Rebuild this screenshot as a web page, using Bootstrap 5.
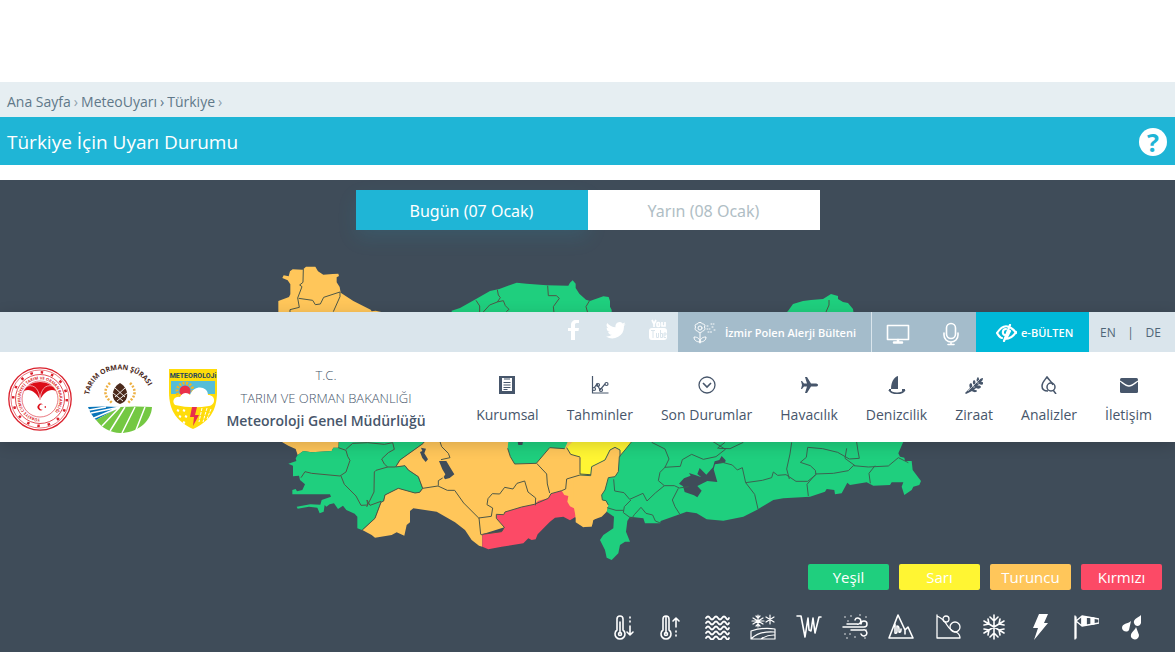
<!DOCTYPE html>
<html lang="tr">
<head>
<meta charset="utf-8">
<meta name="viewport" content="width=device-width, initial-scale=1">
<title>Türkiye İçin Uyarı Durumu</title>
<link href="https://cdn.jsdelivr.net/npm/bootstrap@5.3.0/dist/css/bootstrap.min.css" rel="stylesheet">
<style>
body{font-family:"Open Sans","Noto Sans",sans-serif;font-size:14px;color:#47566b;background:#fff}
a{color:inherit;text-decoration:none}
svg{display:block;flex:none}
.top-space{height:82px}
.crumbs{background:#e6eef2;height:35px;padding:3px 7px 0;color:#5f7889;gap:3px}
.crumbs small{font-size:14px;color:#8fa1ad}
.page-title{background:#1fb5d6;height:48px;padding:2px 8px 0 7px;color:#fff}
.page-title h1{font-size:19px;font-weight:400;margin:0;line-height:28px}
.help{width:28px;height:28px;border:0;border-radius:50%;background:#fff;color:#1fb5d6;font-weight:700;font-size:25px;line-height:28px;padding:0}
.map-area{margin-top:15px;background:#3f4c59;padding:10px 13px 12px;overflow:hidden}
.day-tabs{max-width:464px;height:40px;margin:0 auto}
.day-tabs button{flex:1;border:0;background:#fff;color:#b0bec5;font-family:"Noto Sans",sans-serif;font-size:16px;padding-top:3px}
.day-tabs button.today{background:#1fb5d6;color:#fff;box-shadow:0 8px 20px rgba(31,181,214,.12)}
.turkey{max-width:675px;width:100%;margin:20px auto 4px}
.levels{gap:10px}
.levels span{width:81px;height:26px;border-radius:2px;color:#fff;text-align:center;font-size:15px;line-height:27px}
.g{background:#1fcf7e}.y{background:#fff533}.o{background:#ffc65a}.r{background:#fc4a66}
.events{max-width:533px;margin:24px 17px 0 auto}
.events svg,.line-icon{fill:none;stroke:#fff;stroke-width:1.6;stroke-linecap:round;stroke-linejoin:round}
.site-head{position:absolute;top:312px;left:0;right:0;z-index:5;background:#fff;box-shadow:0 3px 14px rgba(0,0,0,.16)}
.util{background:#dae5ec;height:40px;font-size:12px;white-space:nowrap}
.social{gap:22px;margin-right:10px;padding-bottom:4px}
.polen{background:#a4bccb;color:#fff;font-weight:600;font-size:11px;width:193px;padding:2px 14px 0;gap:9px}
.tools{background:#a4bccb;width:105px;border-left:1px solid #dae5ec;padding:3px 16px 0 14px}
.bulletin{background:#00b8d8;color:#fff;font-weight:600;font-size:11px;width:113px;padding:2px 15px 0 20px;gap:4px}
.langs{width:86px;padding:1px 14px 0 11px;color:#4f6577}
.brand-row{height:90px;padding:0 23px 0 8px}
.logos{gap:13px}
.agency{width:200px;margin-left:8px;padding-top:2px;font-weight:300;line-height:22px;font-size:13px}
.agency strong{font-size:14px;font-weight:600;white-space:nowrap}
.agency p{margin:0 0 1px}
.main-menu{gap:28px;padding-top:8px}
.main-menu a{display:flex;flex-direction:column;align-items:center;gap:10px;line-height:22px}
</style>
</head>
<body>
<header class="site-head">
<div class="util d-flex justify-content-end align-items-stretch">
  <div class="social d-flex align-items-center">
    <a href="#" aria-label="Facebook"><svg width="20" height="20" fill="#fff"><path d="M7 20V11H4V8h3V5c0-3 2-5 5-5h3v3h-2c-2 0-2 1-2 2v3h4l-.5 3H11v9z"/></svg></a>
    <a href="#" aria-label="Twitter"><svg width="20" height="20" viewBox="0 0 24 24" fill="#fff"><path d="M23.600 4.900a10 10 0 0 1-2.700.8 5 5 0 0 0 2.100-2.700 10 10 0 0 1-3.100 1.200 4.900 4.900 0 0 0-8.400 4.500A14 14 0 0 1 1.500 3.500 4.900 4.900 0 0 0 3 10a5 5 0 0 1-2.200-.6 4.900 4.900 0 0 0 4 4.900 5 5 0 0 1-2.300.1 4.900 4.900 0 0 0 4.600 3.400A10 10 0 0 1 0 19.900 14 14 0 0 0 21.500 7.300a10 10 0 0 0 2.100-2.400z"/></svg></a>
    <a href="#" aria-label="YouTube"><svg width="20" height="22" fill="#fff"><rect x="1" y="9" width="18" height="12" rx="3"/><g fill="none" stroke="#fff" stroke-width="1.700"><path d="M4 1l2 4 2-4M6 5v3"/><rect x="9" y="3.500" width="2.500" height="4" rx="1"/><path d="M14 3v4h3V3"/></g><g fill="none" stroke="#dae5ec"><path d="M3 11.500h4M5 12v7M8.500 14v4.500h2V14M12.500 11v7.500h2v-4h-2M16 16h2v-2h-2v4.500h2"/></g></svg></a>
  </div>
  <a href="#" class="polen d-flex align-items-center"><svg width="24" height="24" class="line-icon" style="stroke-width:1"><circle cx="8" cy="7" r="2"/><path d="M8 1.500c2 0 2 1 2.500 1.500 2 0 3 1 2 3 1 2 0 4-2 4-1 2-4 2-5 0-2 0-3-2-2-4-1-2 0-3 2-3 0-1 1-1.500 2.500-1.500zM8 12v10M8 21c-4 0-6-2-6-5 4 0 6 2 6 5zm0 0c0-3 2-5 6-5 0 3-2 5-6 5z"/><path d="M15 5h2m2-2h3m-7 5h3m2-2h1m-5 5h4m2-2h1" stroke-dasharray="1 1.500"/></svg>İzmir Polen Alerji Bülteni</a>
  <div class="tools d-flex align-items-center justify-content-between">
    <a href="#" aria-label="Ekran"><svg width="24" height="22" class="line-icon"><rect x="1.500" y="2.500" width="21" height="14"/><path d="M12 17v2M8 19.500h8" stroke-width="2.500"/></svg></a>
    <a href="#" aria-label="Ses"><svg width="18" height="24" class="line-icon"><rect x="4.500" y="1.500" width="9" height="15" rx="4.500"/><path d="M2 11v2a7 7 0 0 0 14 0v-2M9 20v2M6 22.500h6"/></svg></a>
  </div>
  <a href="#" class="bulletin d-flex align-items-center"><svg width="21" height="18" class="line-icon" style="stroke-width:2.200"><path d="M1 9c4-6 8-8 12-6M20 8c-3 5-6 7-11 7M1 9c2 3 3 5 5 5M15 4c2 1 4 3 5 5M14 1L8 17M10 5C6 5 6 11 9 11M14 7l-3 6"/></svg>e-BÜLTEN</a>
  <div class="langs d-flex align-items-center justify-content-between"><a href="#">EN</a><span>|</span><a href="#">DE</a></div>
</div>
<div class="brand-row d-flex align-items-center">
  <a href="#" class="logos d-flex align-items-center pt-1" aria-label="Kurum logoları">
    <svg width="64" height="66" viewBox="0 0 64 66"><g fill="none" stroke="#da1f2b"><circle cx="32" cy="33" r="31.200" stroke-width="1.300"/><circle cx="32" cy="33" r="29" stroke-width=".6"/><circle cx="32" cy="33" r="24.500" stroke-width=".8"/><circle cx="32" cy="33" r="18" stroke-width=".6"/><circle cx="32" cy="33" r="26.800" stroke-width="2.500" stroke-dasharray="2.500 8.020"/></g><path id="sealRing" d="M32 52.500a19.500 19.500 0 1 1 .1 0" fill="none"/><text font-size="4" font-weight="700" fill="#da1f2b"><textPath href="#sealRing">TÜRKİYE CUMHURİYETİ TARIM VE ORMAN BAKANLIĞI</textPath></text><path d="M16 25c6-12 26-12 32 0-6-3-12 1-16 9-4-8-10-12-16-9z" fill="#dc0d18"/><path d="M19 20c9-2 12 5 13 13M45 20c-9-2-12 5-13 13" fill="none" stroke="#fff" stroke-width=".6"/><path d="M35 38.500a3.300 3.300 0 1 0 0 5 2.700 2.700 0 1 1 0-5zM36 41l2-1v2z" fill="#dc0d18"/></svg>
    <svg width="70" height="68" viewBox="0 0 70 68" overflow="visible"><path id="pineArc" d="M4 30C10-4 60-4 67 31" fill="none"/><text font-size="7" font-weight="700" fill="#4b2a1c"><textPath href="#pineArc">TARIM ORMAN ŞÛRASI</textPath></text><path d="M35 18c-5 3-8 8-7 14 1 4 4 6 7 7 3-1 6-3 7-7 1-6-2-11-7-14z" fill="#4b2a1c"/><path d="M30 23l10 9M28 28l10 8M40 23l-10 9M42 28l-10 8" stroke="#fff" stroke-width=".9"/><path d="M25 18q-8 8-2 16l4 4M45 18q8 8 2 16l-4 4" fill="none" stroke="#edb043" stroke-width="2.500" stroke-dasharray="2 1.500"/><path d="M3 42q15-1 32 0L11 55Q6 50 3 42z" fill="#0875b9"/><path d="M35 42q17-1 32 0c-1 16-16 26-32 26-9 0-18-5-24-13z" fill="#74c843"/><path d="M35 42L6 48M35 42L9 53M35 42L17 61M40 42L25 66M50 42L37 68M60 42L51 65M21 42L4 45" stroke="#fff" stroke-width="1.500"/></svg>
    <svg width="50" height="62" viewBox="0 0 50 62"><path d="M1 1h48v23c0 20-9 30-24 37C10 54 1 44 1 24z" fill="#ffdc0a"/><path d="M3 13h44v13H3z" fill="#55bdd8"/><circle cx="17" cy="23" r="8" fill="none" stroke="#f6b41b" stroke-width="3" stroke-dasharray="2 1.500"/><circle cx="17" cy="23" r="5.500" fill="#ea3048"/><path d="M7 37c-4-4 0-9 5-8 2-5 8-5 10-2 4-11 18-9 18 0 8 0 8 10 1 11q-17 3-34-1z" fill="#fff"/><path d="M24 39h5l-2 8h4l-6 11 1-9h-4z" fill="#e8304b"/><path d="M9 42l2 1m4-1l2 1m-6 5l2 1m4-1l2 1m-4 5l2 1" stroke="#fff" stroke-width="2"/><path d="M34 40l-3 14m8-14l-4 14m8-13l-4 10" stroke="#fff" stroke-dasharray="3 1"/><text x="25" y="10" text-anchor="middle" font-family="Roboto" font-size="7" font-weight="700" fill="#25465d">METEOROLOJi</text></svg>
  </a>
  <div class="agency text-center"><p>T.C.</p><p>TARIM VE ORMAN BAKANLIĞI</p><strong>Meteoroloji Genel Müdürlüğü</strong></div>
  <nav class="main-menu d-flex ms-auto" aria-label="Ana menü">
    <a href="#"><svg width="18" height="18"><path d="M1 0h16v18H1z" fill="#47566b"/><path d="M4 2h10v13H4z" fill="#fff"/><path d="M6 3h6M5.500 6.500h7M5.500 9h7M5.500 11.500h7M5.500 13.500h4" stroke="#47566b" stroke-width="1.200"/></svg>Kurumsal</a>
    <a href="#"><svg width="18" height="18" fill="none" stroke="#47566b" stroke-width="1.200"><path d="M1.500 0v17h16M3 12l3-4 3 6 5-6"/><circle cx="3" cy="13" r="1.500"/><circle cx="7" cy="9" r="1.500"/><circle cx="10" cy="14" r="1.500"/><circle cx="15.500" cy="8" r="1.500"/></svg>Tahminler</a>
    <a href="#"><svg width="18" height="18" fill="none" stroke="#47566b" stroke-width="1.300"><circle cx="9" cy="9" r="8"/><path d="M5 7l4 4 4-4" stroke-width="1.600"/></svg>Son Durumlar</a>
    <a href="#"><svg width="18" height="18" fill="#47566b"><path d="M18 9c0 1-1 1.500-3 1.500h-4L7 17H5l2-6.500H4L2 13H1l1-4-1-4h1l2 2.500h3L5 1h2l4 6.500h4c2 0 3 .5 3 1.500z"/></svg>Havacılık</a>
    <a href="#"><svg width="18" height="18"><path d="M3 13C3 6 6 1 10 0v13z" fill="#47566b"/><path d="M1 14c3 4 12 5 16 0M1 14h2m11 0h3" fill="none" stroke="#47566b" stroke-width="1.800"/></svg>Denizcilik</a>
    <a href="#"><svg width="18" height="18" fill="#47566b"><path d="M1 18l-1-1 5-5c-1-2-1-4 1-5 1 1 2 3 1 4l2-2c-2-2-1-4 0-5 2 1 2 3 1 4l2-2c-1-2 0-4 1-5 1 1 1 2 1 3 1-1 2-2 4-2 0 2-1 3-2 4 1 0 2 0 3 1-1 2-3 2-5 1l-2 2c2-1 4 0 4 1-1 2-3 2-5 1l-2 2c2 0 3 0 3 1-1 2-4 1-5 0z"/><path d="M3 15L15 3M8 8v2m3-5v2M8 11h2m2-4h2" stroke="#fff" stroke-width=".6"/></svg>Ziraat</a>
    <a href="#"><svg width="18" height="18" fill="none" stroke="#47566b" stroke-width="1.500"><path d="M8 15c-4 0-6-2-6-5 0-4 3-6 5-9 2 3 5 5 6 8"/><circle cx="11" cy="11" r="4"/><path d="M13 14l3 4"/></svg>Analizler</a>
    <a href="#"><svg width="18" height="18"><rect x="0" y="2" width="18" height="15" rx="1.500" fill="#47566b"/><path d="M0 5c3 2 6 5 9 5s6-3 9-5" fill="none" stroke="#fff" stroke-width="1.300"/></svg>İletişim</a>
  </nav>
</div>
</header>
<main>
<div class="top-space"></div>
<nav class="crumbs d-flex align-items-center" aria-label="Konum"><a href="#">Ana Sayfa</a><small>›</small><a href="#">MeteoUyarı</a><span>›</span><a href="#">Türkiye</a><small>›</small></nav>
<div class="page-title d-flex align-items-center justify-content-between"><h1>Türkiye İçin Uyarı Durumu</h1><button class="help" type="button">?</button></div>
<section class="map-area">
  <div class="day-tabs d-flex"><button class="today" type="button">Bugün (07 Ocak)</button><button type="button">Yarın (08 Ocak)</button></div>
  <svg class="turkey" viewBox="250 250 675 310" role="img" aria-label="Türkiye uyarı haritası">
    <g transform="translate(270 255) scale(.33333)">
      <path fill="#ffc65a" d="M25 180V138l32-12 4-8V88l-8-12-16-7 4-8 15 3 4-15 8-6 30 1 10-9h28l8 14 16 10 28-2 17-1 2 7-7 4v15l9 14 3 17 38 25 52 26 3 5 12-2 20 5v10z"/>
      <path fill="#1fcf7e" d="M545 175v-8l25-8 48-27 42-24 28-6 52-19 30 3 60 5 65 1 5-9 8-7 9 10v13l11 17 20 18 12 4 40-14 16 2 4 12v17l5 10v10z"/>
      <path fill="none" stroke="#4d5746" stroke-width="3" d="M100 42l-1 40-10 8 7 5-13 34 5 28-28 7v10M86 130l42 6 8 13 15-2 10-20 49-16 0 14-20 45M618 136l11 17v22M682 104l3 16 6 8-9 13-23 9-20 22M682 141l18-4 6 15 11 11-8 7M833 92l2 30 24 0 9 8-18 25 2 18M958 138l-10 17 5 18"/>
    </g>
    <path fill="#1fcf7e" d="M783 316l5-5 5-7 10-3 8-1 12-1 8-5 7 2v3l5 3 5 1 5 6 1 7z"/><path d="M829 300v5l-3 7" fill="none" stroke="#4d5746"/>
    <g transform="translate(275 435) scale(.33333)">
      <path fill="#ffc65a" d="M22 0v22l18 10 22 10 6 18 17-12 25 4 60-4 5-10h15l2-38zM450 0v20l-5 5-70 50-13 21 28-4 10 13 30 20 13 35-9 12-14 2-50-14-40 20-4 18-8 4-18 48-38 35 28 15 10 8 50-8 15-8 23 10 7-32 10-8v-34l10-8 70 10 55 32 30 23 20 30 22 17 10 3 0-37 218-70 60 17 25 30h25l5-20 35-22V0z"/>
      <path fill="#1fcf7e" d="M192 0v22l-2 16h-15l-5 10-60 4-25-4-17 12-6 10 2 8-24 8 14 6v32l18-2 3 13 15 13-8 17-16 4-4-7-10 3v13l113 0 3 7-28 10-4 14-30-1-41 7 3 6 34-6 25 3 7 17 12-5 3-20 5 5 10-7 13-3 12 17 15-10 10 13 25 11 8 9v35l14 5 38-35 18-48 8-4 4-18 40-20 50 14 14-2 9-12-13-35-30-20-10-13-28 4 13-21 70-50 7-25zM702 0l-4 40 8 25 13 22 65-2 40-47 45 3 8-18V0zM990 160l-12 30 2 10 10-3z"/>
      <path fill="#fff533" d="M875 38l18-18V0h190v20l-20 40-10-20-20-2-25 42-50 15-1 27-44-3 4-52-28-8z"/>
      <path fill="#fc4a66" d="M622 298L680 290 688 277 664 250 664 238 686 239 690 231 740 216 778 208 790 197 820 190 828 176 860 167 868 180 880 183 877 200 885 214 897 220 902 245 885 256 865 245 840 248 825 260 810 275 788 298 782 313 770 315 760 310 745 325 680 335 640 343 622 335z"/>
      <g fill="#3f4c59"><path d="M438 38l15 3-5 14 11 18-7 8-10-12-7-18 7-3zM492 78l22 0 12 20 12 20-14 11-14 4-4-7 5-8-9-15zM727 15h18l-3 15h-12z"/></g>
      <path fill="none" stroke="#4d5746" stroke-width="3" d="M190 38l23 8 5 18 7 12-12 35-18 12-85-8-20-5-12 18M213 43l20-18 45-2 50 5 25-5 5 20-18 10-20 19 8 15 10 9-35 10-5 5-1 60-22 45M198 123l10 25 35 35 15 28 20-1-2-15 9 16 33-12M338 96l23 0M445 25l-70 50-13 21 28-4 10 13 30 20 13 35-9 12-14 2-50-14-40 20-4 18-8 4-18 48-38 35M698 40l8 25 13 22 65-2 40-47 45 3M495 20l5 15 20 20 5 13-27 6M490 152v-15l13-8M443 160l46-7 28 13 22 0 27 38 45 45 38-5 4-25-17-10 3-18 13-15 22 1 15-20 25 5 12-17 23-7 10 33 23 18-1 22M612 248l5 50 5 2M785 85l30 32 2 30 7 27M875 38l12 20 28 8M860 167l12-5 3-30 40-12M915 67l0 50 44 3M622 298L680 290 688 277 664 250 664 238 686 239 690 231 740 216 778 208 820 190 828 176 860 167"/>
    </g>
    <g transform="translate(570 435) scale(.33333)">
      <path fill="#fff533" d="M100 0H195L160 60 100 80z"/>
      <path fill="#ffc65a" d="M10 130L62 122 65 95 105 75 120 45 135 37 150 45 155 55 150 110 140 128 120 132 100 180 100 196 115 198 118 210 110 230 95 245 68 255 66 272 40 277 17 262V225L10 213z"/>
      <path fill="#1fcf7e" d="M185 0v20l-20 25-17 20-3 45-10 15-20 3-10 37-10 15 2 15 11 2 7 13-5 20 22 15-2 35-30 20-10 15 15 30 5 23 15 7 20-20 5-25 15-10h15l-12-30 4-32 8-13 40 5 5 15h45l2-7 78-28 30 5 30 18 50 4 60-12 40-20 50-30 30-5 80-5 45-15 5-8 23 3 2 13 20-3 17-32 8 7 50-8 20 10 50-2 5-8h35l-5 13 8 25 22-15 5-10 18-5 5-12-25-33-3-27h-20l-2-10-13-3-5-10 15-35V0z"/>
      <path fill="#3f4c59" d="M342 130l20-8-5-8 25 8 12 5-12-10 7-18 20 20 20-22 5-18 14-4 7-12 12 13-2 7-30 5-4 15 11 38-30-3-30 15 13 14-13 20-10-6-28-10-5-17-12-8z"/>
      <path fill="none" stroke="#3b6250" stroke-width="3" d="M30 120L62 122 65 95 105 75 120 45 135 37 150 45 150 65M185 20l-20 25-17 20-3 45-10 15-20 3-10 37-10 15 2 15 11 2 7 13M245 22l40 20 12 30-12 25-15 15-5 25 18 15-27 22-25 24-12-23-40 18-17-20-28-5-3-35M183 195l-20 20-3 18 25 18 8-12 20-22 15 18 20 5 8 18 15 6M111 218l27 8 22 0M283 97l48-3 6-20 28-16 35 15 38-8 28-22-40-25-48-5M465 22l-23 18M445 40l35 1 40-19M283 152l30 0 15 7 28-4M325 160l-18 35 8 20 14 22M450 80l37 10 15 15 15-7 10 45 27 35 10 44M527 143l50-7 28-8 5-17 13 10 25-2 30 20 35 0 25-20-2-13-15-14-30-10 18-15 4-30 45 4 45 11 35 20 30-2-4-22-5-33M665 22l-5 35-10 45 8 30M735 117l55-2 45-8 15-15 45 4 60-3 30-25 30 15M735 120l-24 28 4 35M830 40l-5 30 30 22M915 92l-18 23 4 30"/>
    </g>
  </svg>
  <div class="levels d-flex flex-wrap justify-content-end"><span class="g">Yeşil</span><span class="y">Sarı</span><span class="o">Turuncu</span><span class="r">Kırmızı</span></div>
  <div class="events d-flex justify-content-between">
    <svg width="26" height="26"><path d="M5 16V5a3 3 0 0 1 6 0v11a5 5 0 1 1-6 0zM8 8v11M18 3v1m0 3v1m0 4v9m-3-3l3 3 3-3"/><circle cx="8" cy="20" r="1.500"/></svg>
    <svg width="26" height="26"><path d="M5 16V5a3 3 0 0 1 6 0v11a5 5 0 1 1-6 0zM8 3v16M18 22v-1m0-3v-1m0-4V4m-3 3l3-3 3 3"/><circle cx="8" cy="20" r="1.500"/></svg>
    <svg width="26" height="26" style="stroke-width:1.800"><path d="M2 4q2-3 4 0t4 0 4 0 4 0 4 0 3 0M2 9q2-3 4 0t4 0 4 0 4 0 4 0 3 0M2 14q2-3 4 0t4 0 4 0 4 0 4 0 3 0M2 19q2-3 4 0t4 0 4 0 4 0 4 0 3 0M2 24q2-3 4 0t4 0 4 0 4 0 4 0 3 0"/></svg>
    <svg width="26" height="26" style="stroke-width:1.200"><path d="M8 1v12M3 4l10 6M3 10l10-6M6 2l2 2 2-2M6 12l2-2 2 2M2 7h12M20 1v9M16 3l8 5M16 8l8-5M1 17q12-4 24-2v10H1zM2 24q8-7 22-6M11 25q6-4 13-4"/></svg>
    <svg width="26" height="26"><path d="M1 2h4l4 21 3-19 1 12 2 1 2-13 2 15 4-16h2"/></svg>
    <svg width="26" height="26" style="stroke-width:1.500"><path d="M1 13h21a3 3 0 1 0-3-3M5 10h10a3 3 0 1 0-2-4M9 16h12a3 3 0 1 1-2 4M3 3h0m6-1h0m9-1h0m6 2h0M6 7h0M3 20h0m5 0h0m5 3h0m-8 1h0m18 0h0M24 16h0"/></svg>
    <svg width="26" height="26"><path d="M1 24L10 1l7 15 3-3 5 11zM7 10v9q2 1 2-2v-5q2 0 2 3v3q2 1 2-3M17 16v4"/></svg>
    <svg width="26" height="26" style="stroke-width:1.300"><path d="M2 1v23h23q0-4-4-6M2 2q7 3 10 9 3 5 8 7"/><circle cx="11" cy="5" r="3"/><circle cx="20" cy="13" r="5"/></svg>
    <svg width="26" height="26"><path d="M13 1v24M3 7l20 12M3 19L23 7M9 3l4 4 4-4M9 23l4-4 4 4M3 11l5-1-1-5M23 11l-5-1 1-5M3 15l5 1-1 5M23 15l-5 1 1 5"/></svg>
    <svg width="26" height="26"><path fill="#fff" stroke="none" d="M12 0h9l-4 9h4L7 26l4-12H6z"/></svg>
    <svg width="26" height="26" style="stroke-width:1.300"><path d="M2 2v23M3 3v21M3 7l6-5 17 3v4L9 12zM9 2v10M13 3v8M19 4v6"/><path d="M9 3h4v8H9zM18 4h3v6h-3z" fill="#fff"/></svg>
    <svg width="26" height="26"><g fill="#fff" stroke="none"><path d="M22 1v8c-1 4-6 4-7 0-1-4 4-5 7-8zM12 7l-2 9c-2 3-7 1-7-2 0-5 6-4 9-7zM17 13l3 8c0 5-6 6-8 2-1-5 4-6 5-10z"/></g></svg>
  </div>
</section>
</main>
<script src="https://cdn.jsdelivr.net/npm/bootstrap@5.3.0/dist/js/bootstrap.bundle.min.js"></script>
</body>
</html>
